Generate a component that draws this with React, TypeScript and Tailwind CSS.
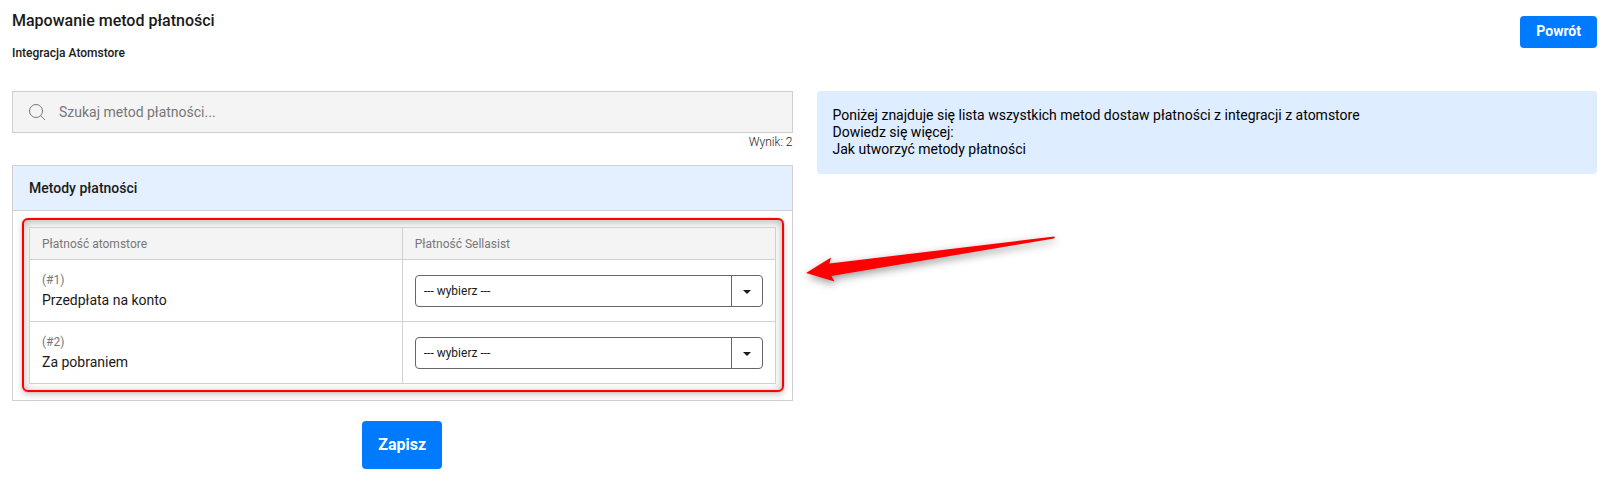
import { useState } from "react"

const FONT = "font-[Roboto,'Noto_Sans',sans-serif]"

const methods = [
  { id: 1, name: "Przedpłata na konto" },
  { id: 2, name: "Za pobraniem" },
]

function SearchIcon() {
  return (
    <svg
      className="absolute left-4 top-3 size-[18px] text-[#777]"
      viewBox="0 0 18 18"
      fill="none"
      stroke="currentColor"
      aria-hidden="true"
    >
      <circle cx="8" cy="8" r="6.5" />
      <path d="M12.5 12.5 17 17" />
    </svg>
  )
}

function MethodSelect({ id }: { id: number }) {
  const [value, setValue] = useState("")

  return (
    <div className="relative">
      <select
        id={`method-${id}`}
        value={value}
        onChange={(e) => setValue(e.target.value)}
        className="block h-8 w-full appearance-none rounded border border-[#666] bg-white pl-2 pr-10 text-xs text-[#1a1a1a]"
      >
        <option value="">--- wybierz ---</option>
        <option value="transfer">Przelew</option>
        <option value="cod">Pobranie</option>
      </select>
      <span className="pointer-events-none absolute inset-y-0 right-0 flex w-8 items-center justify-center border-l border-[#666] pt-0.5">
        <svg className="h-1 w-2" viewBox="0 0 8 4" fill="#1a1a1a" aria-hidden="true">
          <path d="M0 0h8L4 4z" />
        </svg>
      </span>
    </div>
  )
}

function Arrow() {
  return (
    <svg
      className="pointer-events-none absolute left-full top-16 ml-3 h-16 w-64 overflow-visible"
      viewBox="0 0 256 64"
      fill="#f00"
      aria-hidden="true"
    >
      <path
        className="drop-shadow-[1px_3px_4px_rgba(0,0,0,0.4)]"
        d="M2 43 27 27.5 25.500 33.500 250 6.500Q251.500 7 250 8.500L27.500 46 30.500 51.500Z"
      />
    </svg>
  )
}

export default function App() {
  return (
    <div className={`${FONT} bg-white pb-3 pl-3 pr-4 text-[#1a1a1a]`}>
      <header className="flex items-start justify-between pt-[9px]">
        <div>
          <h1 className="text-base font-medium leading-6">Mapowanie metod płatności</h1>
          <h2 className="mt-3 text-xs font-medium leading-4">Integracja Atomstore</h2>
        </div>
        <button type="button" className="mt-[7px] h-8 rounded bg-[#007bff] px-4 pb-0.5 text-sm font-bold text-white">
          Powrót
        </button>
      </header>

      <main className="mt-[30px] grid grid-cols-2 items-start gap-6">
        <div>
          <div className="relative">
            <SearchIcon />
            <input
              type="search"
              aria-label="Szukaj metod płatności"
              placeholder="Szukaj metod płatności..."
              className="block h-[42px] w-full border border-[#d0d0d0] bg-[#f4f4f4] pl-[46px] pr-4 text-sm placeholder:text-[#777]"
            />
          </div>
          <p className="text-right text-xs font-light leading-[18px]">Wynik: 2</p>

          <section className="relative mt-[14px] border border-[#d0d0d0]">
            <h3 className="border-b border-[#d0d0d0] bg-[#e4f0ff] px-4 py-3 text-sm font-medium leading-5">
              Metody płatności
            </h3>
            <div className="p-4">
              <div className="relative">
                <div className="pointer-events-none absolute -bottom-2 -left-[7px] -right-2 -top-[9px] rounded-md border-2 border-[#f00] shadow-[0_0_1px_rgba(255,0,0,0.8),0_3px_6px_rgba(0,0,0,0.2),inset_0_2px_10px_rgba(0,0,0,0.3)]" />
                <table className="relative w-full table-fixed border-collapse bg-white">
                  <thead>
                    <tr className="bg-[#f4f4f4] text-left text-xs text-[#777]">
                      <th className="h-8 border border-[#d0d0d0] px-3 font-normal">Płatność atomstore</th>
                      <th className="h-8 border border-[#d0d0d0] px-3 font-normal">Płatność Sellasist</th>
                    </tr>
                  </thead>
                  <tbody>
                    {methods.map((method) => (
                      <tr key={method.id} className="h-[62px]">
                        <td className="border border-[#d0d0d0] px-3 pb-px">
                          <label htmlFor={`method-${method.id}`} className="block">
                            <span className="block text-xs leading-5 text-[#777]">(#{method.id})</span>
                            <span className="block text-sm leading-[21px]">{method.name}</span>
                          </label>
                        </td>
                        <td className="border border-[#d0d0d0] px-3">
                          <MethodSelect id={method.id} />
                        </td>
                      </tr>
                    ))}
                  </tbody>
                </table>
              </div>
            </div>
            <Arrow />
          </section>

          <div className="mt-5 flex justify-center">
            <button type="button" className="h-12 rounded bg-[#007bff] px-4 text-base font-bold text-white">
              Zapisz
            </button>
          </div>
        </div>

        <aside className="rounded bg-[#deedff] p-4 text-sm leading-[17px] text-black">
          <p>Poniżej znajduje się lista wszystkich metod dostaw płatności z integracji z atomstore</p>
          <p>Dowiedz się więcej:</p>
          <p>
            <a href="#pomoc">Jak utworzyć metody płatności</a>
          </p>
        </aside>
      </main>
    </div>
  )
}
